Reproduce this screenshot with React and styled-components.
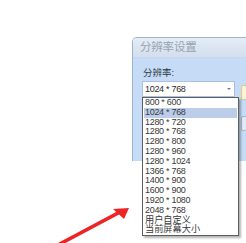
import React from 'react';
import styled, { createGlobalStyle } from 'styled-components';

const GlobalStyle = createGlobalStyle`
  html, body {
    margin: 0;
    padding: 0;
    background: #ffffff;
  }
  #root {
    width: 246px;
    height: 243px;
    overflow: hidden;
    position: relative;
  }
`

const Stage = styled.div`
  width: 246px;
  height: 243px;
  padding: 37px 0 0 132px;
  box-sizing: border-box;
  font-family: "Liberation Sans", "Noto Sans CJK SC", sans-serif;
`
const Dialog = styled.div`
  width: 150px;
  border: 1px solid #a2b4c9;
  border-bottom: none;
  border-radius: 5px 5px 0 0;
  overflow: visible;
`
const TitleBar = styled.div`
  height: 19px;
  border-radius: 4px 4px 0 0;
  background: linear-gradient(#e6edf6 0%, #dce6f2 45%, #d3dfee 100%);
  border-bottom: 1px solid #c7d6e8;
  color: #97a3b1;
  font-size: 11.5px;
  line-height: 19px;
  padding-left: 7px;
  letter-spacing: -0.2px;
`
const Body = styled.div`
  height: 103px;
  background: #c5dbf6;
  padding: 8px 0 0 9px;
  box-sizing: border-box;
`
const Label = styled.div`
  color: #2f3a46;
  font-size: 9.5px;
  line-height: 13px;
  margin-bottom: 2px;
  padding-left: 1px;
`
const Row = styled.div`
  display: flex;
  gap: 6px;
  align-items: flex-start;
`
const Combo = styled.div`
  position: relative;
  width: 94px;
  height: 16px;
  box-sizing: border-box;
  background: #ffffff;
  border: 1px solid #a9c1e2;
  display: flex;
  align-items: center;
  justify-content: space-between;
  padding: 0 3px 0 2px;
  font-size: 9px;
  letter-spacing: -0.3px;
  color: #2b2b2b;
`
const Caret = styled.span`
  width: 0;
  height: 0;
  border-left: 2px solid transparent;
  border-right: 2px solid transparent;
  border-top: 2px solid #6b7f99;
`
const List = styled.ul`
  position: absolute;
  left: -1px;
  top: 15px;
  width: 95px;
  margin: 0;
  padding: 0;
  list-style: none;
  background: #ffffff;
  border: 1px solid #5e5e5e;
  box-shadow: 2px 2px 2px rgba(0, 0, 0, 0.3);
  z-index: 2;
`
const Item = styled.li`
  height: 9.8px;
  line-height: 9.8px;
  padding-left: 1px;
  margin: 0 1px;
  font-size: ${p => (p.$cjk ? '9.2px' : '9px')};
  letter-spacing: ${p => (p.$cjk ? '0' : '-0.3px')};
  color: #3a3a3a;
  background: ${p => (p.$active ? '#bccdea' : 'transparent')};
  white-space: nowrap;
`
const Buttons = styled.div`
  display: flex;
  flex-direction: column;
  gap: 16px;
  padding-top: 4px;
`
const Button = styled.div`
  width: 40px;
  height: 13px;
  border: 1px solid ${p => (p.$hot ? '#d8c98f' : '#a6b6c9')};
  border-radius: 2px;
  background: ${p => (p.$hot ? '#fbf3d2' : '#e3eaf3')};
`
const Arrow = styled.svg`
  position: absolute;
  left: 0;
  top: 0;
  pointer-events: none;
`

const sizes = [
  '800 * 600',
  '1024 * 768',
  '1280 * 720',
  '1280 * 768',
  '1280 * 800',
  '1280 * 960',
  '1280 * 1024',
  '1366 * 768',
  '1400 * 900',
  '1600 * 900',
  '1920 * 1080',
  '2048 * 768',
];

export default function App() {
  return (
    <>
      <GlobalStyle />
      <Stage>
        <Dialog>
          <TitleBar>分辨率设置</TitleBar>
          <Body>
            <Label>分辨率:</Label>
            <Row>
              <Combo>
                <span>1024 * 768</span>
                <Caret />
                <List>
                  {sizes.map(s => (
                    <Item key={s} $active={s === '1024 * 768'}>{s}</Item>
                  ))}
                  <Item $cjk>用户自定义</Item>
                  <Item $cjk>当前屏幕大小</Item>
                </List>
              </Combo>
              <Buttons>
                <Button $hot />
                <Button />
              </Buttons>
            </Row>
          </Body>
        </Dialog>
      </Stage>
      <Arrow width="246" height="243" viewBox="0 0 246 243">
        <polygon points="56,244 58,247 120,214 118,211" fill="#ee2424" />
        <polygon points="129,208 113,209 124,219" fill="#ee2424" />
      </Arrow>
    </>
  );
}
